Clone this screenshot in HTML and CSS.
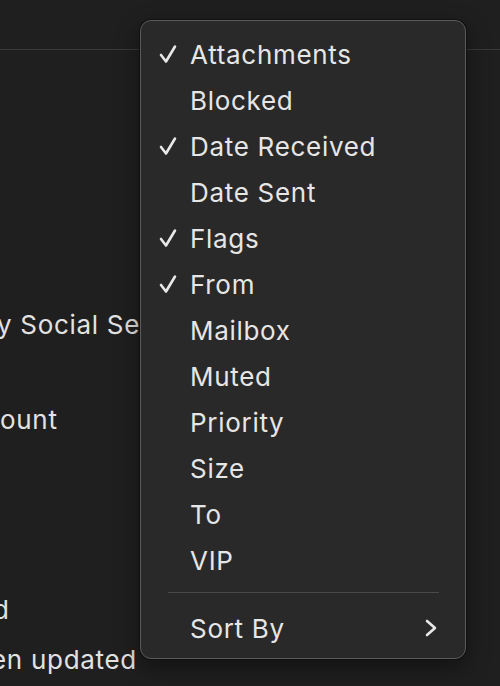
FILE: index.html
```html
<!DOCTYPE html>
<html>
<head>
<meta charset="utf-8">
<link rel="stylesheet" href="styles.css">
</head>
<body>
<div class="page">
  <div class="toolbar"></div>
  <div class="content">
    <div class="bg-line l1">y Social Security</div>
    <div class="bg-line l2">ount</div>
    <div class="bg-line l3">d</div>
    <div class="bg-line l4">en updated</div>
  </div>
  <div class="menu">
    <div class="item"><span class="check"><svg width="18" height="20" viewBox="0 0 18 20"><path d="M2 11 L7 17.5 L16 2.5" fill="none" stroke="#e8e8e8" stroke-width="2.6" stroke-linecap="round" stroke-linejoin="round"/></svg></span><span class="label">Attachments</span></div>
    <div class="item"><span class="check"></span><span class="label">Blocked</span></div>
    <div class="item"><span class="check"><svg width="18" height="20" viewBox="0 0 18 20"><path d="M2 11 L7 17.5 L16 2.5" fill="none" stroke="#e8e8e8" stroke-width="2.6" stroke-linecap="round" stroke-linejoin="round"/></svg></span><span class="label">Date Received</span></div>
    <div class="item"><span class="check"></span><span class="label">Date Sent</span></div>
    <div class="item"><span class="check"><svg width="18" height="20" viewBox="0 0 18 20"><path d="M2 11 L7 17.5 L16 2.5" fill="none" stroke="#e8e8e8" stroke-width="2.6" stroke-linecap="round" stroke-linejoin="round"/></svg></span><span class="label">Flags</span></div>
    <div class="item"><span class="check"><svg width="18" height="20" viewBox="0 0 18 20"><path d="M2 11 L7 17.5 L16 2.5" fill="none" stroke="#e8e8e8" stroke-width="2.6" stroke-linecap="round" stroke-linejoin="round"/></svg></span><span class="label">From</span></div>
    <div class="item"><span class="check"></span><span class="label">Mailbox</span></div>
    <div class="item"><span class="check"></span><span class="label">Muted</span></div>
    <div class="item"><span class="check"></span><span class="label">Priority</span></div>
    <div class="item"><span class="check"></span><span class="label">Size</span></div>
    <div class="item"><span class="check"></span><span class="label">To</span></div>
    <div class="item"><span class="check"></span><span class="label">VIP</span></div>
    <div class="sep"></div>
    <div class="item"><span class="check"></span><span class="label">Sort By</span>
      <svg class="chev" width="14" height="18" viewBox="0 0 14 18"><path d="M3 2 L11 9 L3 16" fill="none" stroke="#e8e8e8" stroke-width="2.6" stroke-linecap="round" stroke-linejoin="round"/></svg>
    </div>
  </div>
</div>
</body>
</html>
```
FILE: styles.css
```css
html, body {
  margin: 0;
  padding: 0;
  background: #1e1e1e;
}
.page {
  position: relative;
  width: 500px;
  height: 686px;
  overflow: hidden;
  font-family: Inter, "Noto Sans", sans-serif;
  color: #e2e2e2;
  background: #1f1f1f;
}
.toolbar {
  height: 49px;
  border-bottom: 1px solid #3a3a3a;
  background: #1f1f1f;
}
.content {
  width: 140px;
  overflow: hidden;
  font-size: 26px;
  letter-spacing: 0.7px;
  white-space: nowrap;
}
.bg-line {
  height: 30px;
  line-height: 30px;
}
.l1 { margin-top: 260px; text-indent: -3px; }
.l2 { margin-top: 65px; }
.l3 { margin-top: 160px; text-indent: -7px; }
.l4 { margin-top: 20px; text-indent: -9px; }
.menu {
  position: absolute;
  left: 140px;
  top: 20px;
  width: 324px;
  padding: 10px 0 7px;
  background: #292929;
  border: 1px solid #5a5a5a;
  border-radius: 11px;
  box-shadow: 0 0 0 1px #111, 0 8px 24px rgba(0,0,0,0.45);
}
.item {
  display: flex;
  align-items: center;
  height: 46px;
  font-size: 26px;
  letter-spacing: 0.7px;
  color: #e6e6e6;
  padding: 0 27px 0 18px;
}
.check {
  width: 31px;
  flex: none;
  display: flex;
  align-items: center;
}
.label {
  flex: 1;
}
.chev {
  flex: none;
}
.sep {
  height: 1px;
  background: #4a4a4a;
  margin: 9px 26px 12px 27px;
}
```
